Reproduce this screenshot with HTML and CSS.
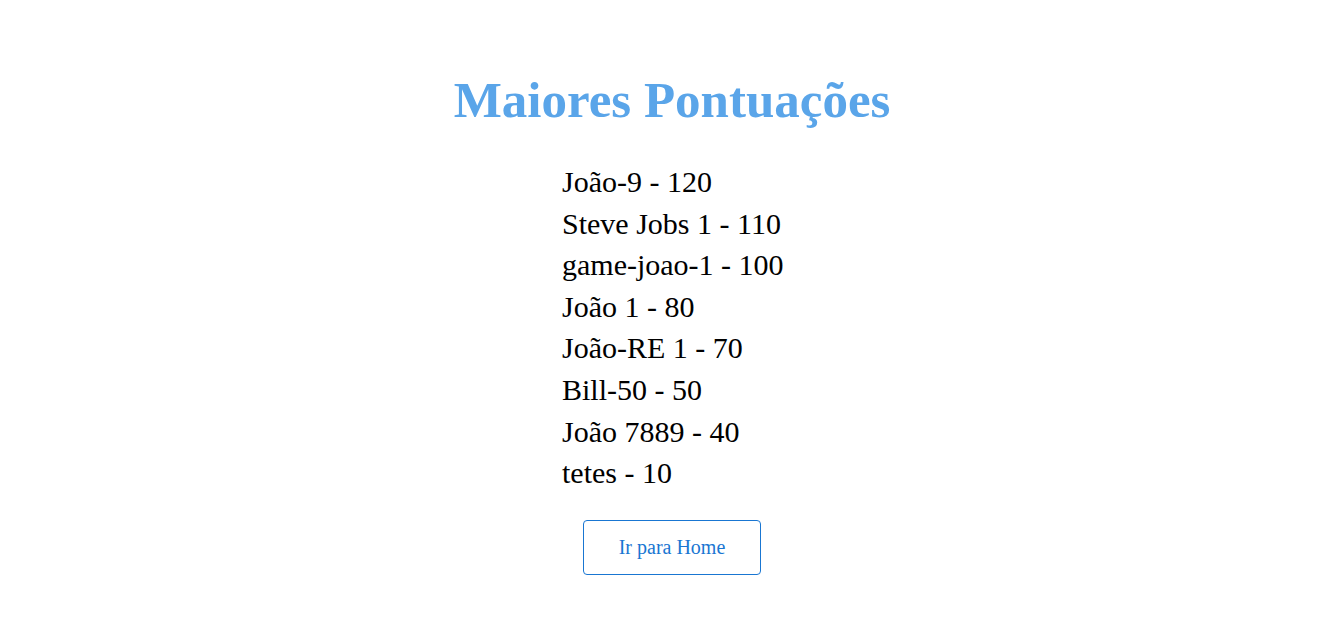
FILE: index.html
```html
<!DOCTYPE html>
<html lang="pt">
<head>
<meta charset="utf-8">
<title>Maiores Pontuações</title>
<link rel="stylesheet" href="styles.css">
</head>
<body>
<main class="page">
  <h1 class="title">Maiores Pontuações</h1>
  <ul class="scores">
    <li class="score">João-9 - 120</li>
    <li class="score">Steve Jobs 1 - 110</li>
    <li class="score">game-joao-1 - 100</li>
    <li class="score">João 1 - 80</li>
    <li class="score">João-RE 1 - 70</li>
    <li class="score">Bill-50 - 50</li>
    <li class="score">João 7889 - 40</li>
    <li class="score">tetes - 10</li>
  </ul>
  <button class="home-btn" type="button">Ir para Home</button>
</main>
</body>
</html>
```

FILE: styles.css
```css
html, body {
  margin: 0;
  padding: 0;
  background: #ffffff;
}

body {
  font-family: "Liberation Serif", "Times New Roman", serif;
  color: #000;
}

.page {
  display: flex;
  flex-direction: column;
  align-items: center;
  padding: 60px 0 0 24px;
}

.title {
  margin: 0;
  font-size: 51px;
  font-weight: bold;
  color: #5aa5e9;
  line-height: 80px;
}

.scores {
  list-style: none;
  margin: 21px 0 0 0;
  padding: 0;
  width: 220px;
}

.score {
  font-size: 30px;
  line-height: 41.6px;
  white-space: nowrap;
}

.home-btn {
  margin-top: 26px;
  width: 178px;
  height: 55px;
  background: #fff;
  border: 1px solid #1976d2;
  border-radius: 4px;
  color: #1976d2;
  font-family: "Liberation Serif", "Times New Roman", serif;
  font-size: 20px;
  padding: 0;
}
```
